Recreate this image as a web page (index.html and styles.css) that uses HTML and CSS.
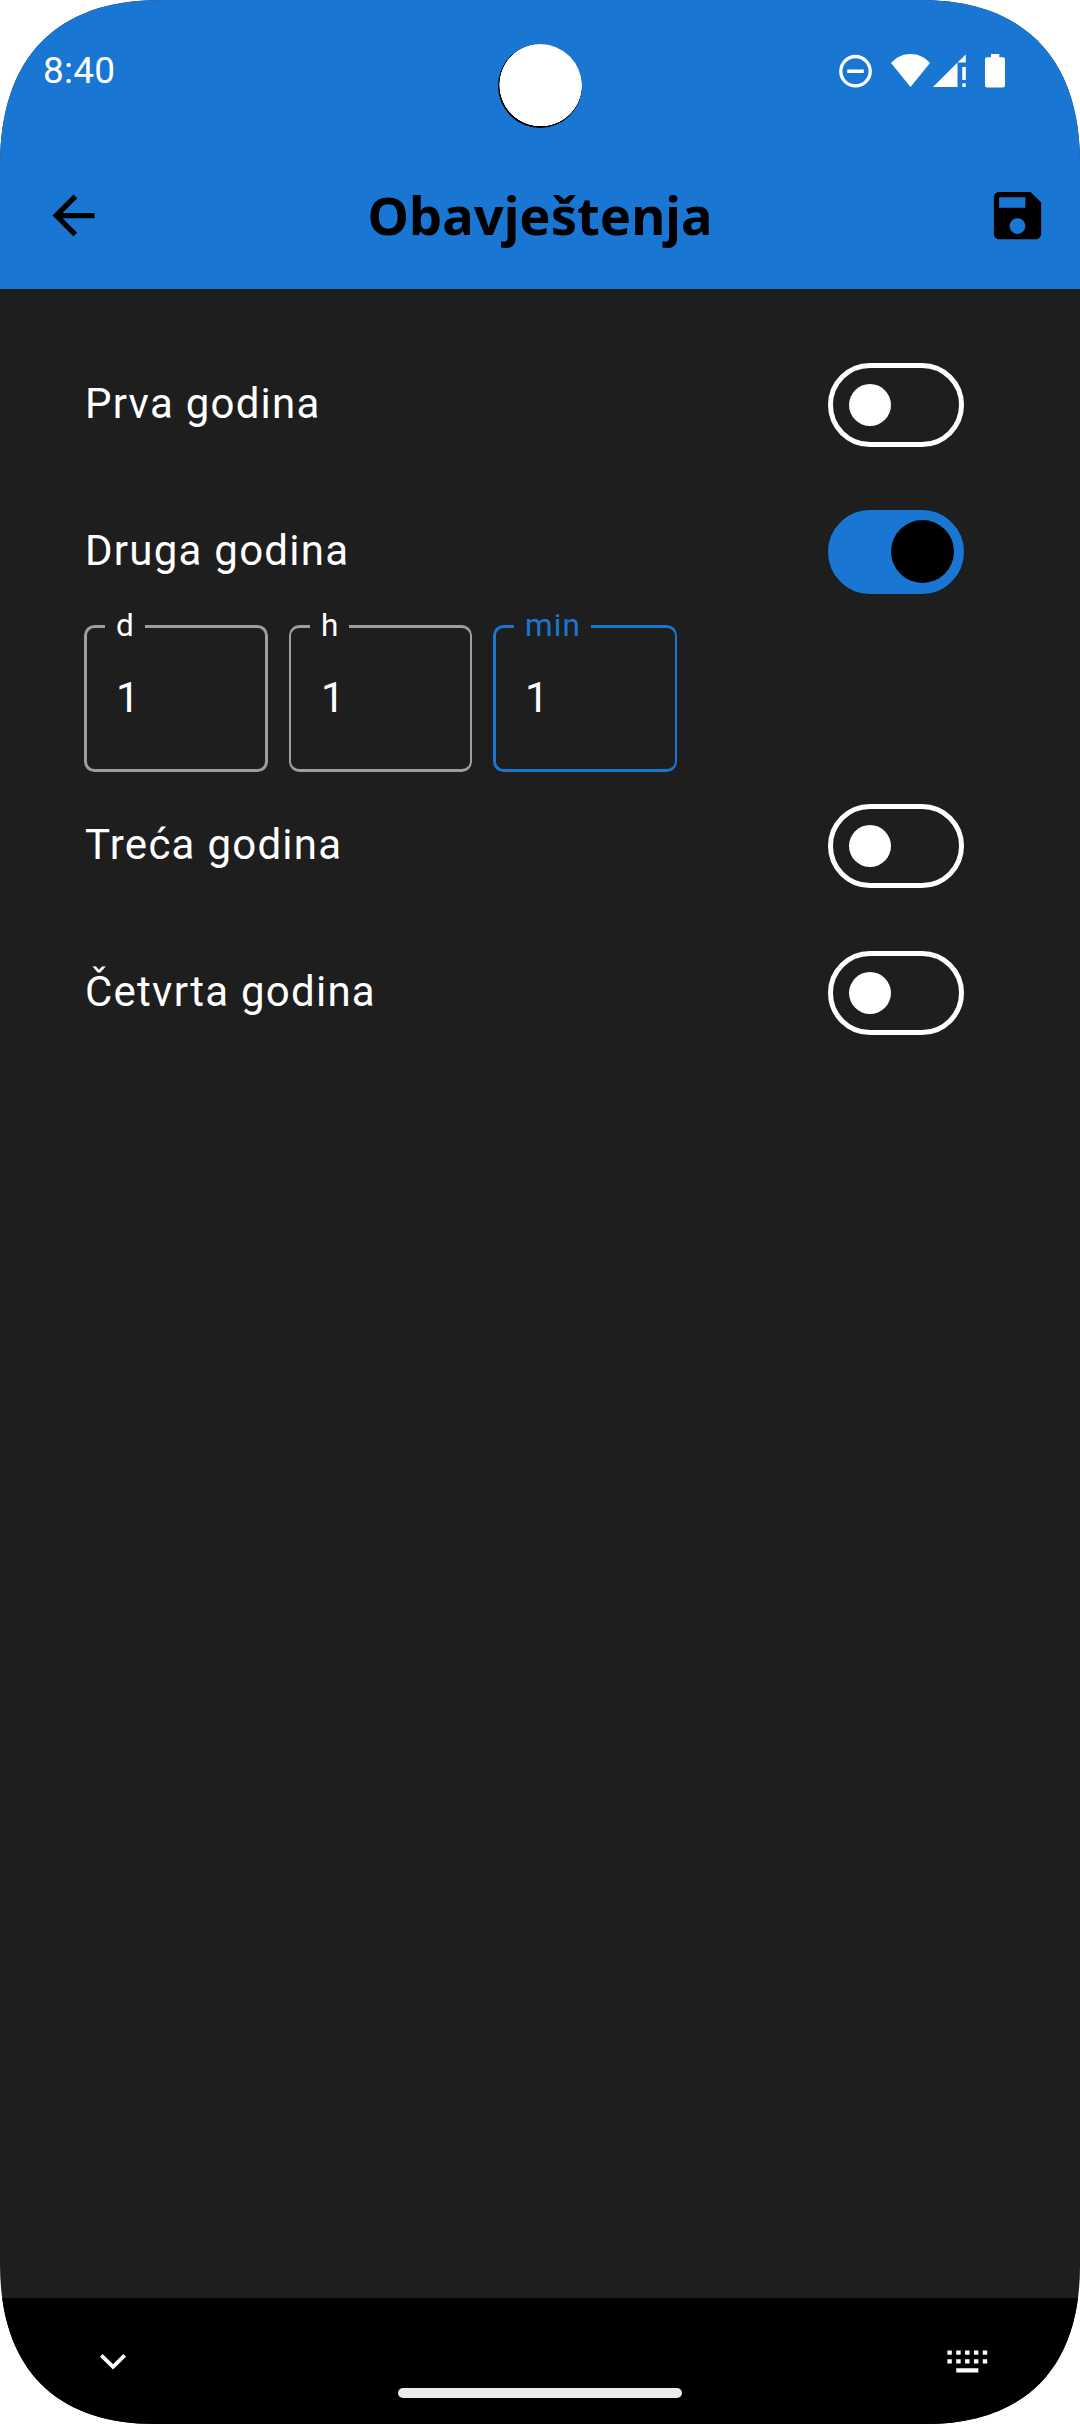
FILE: index.html
```html
<!DOCTYPE html>
<html lang="bs">
<head>
<meta charset="utf-8">
<title>Obavještenja</title>
<link rel="stylesheet" href="styles.css">
</head>
<body>
<div class="screen">
  <div class="camera"></div>
  <header class="top">
    <div class="status">
      <span class="clock">8:40</span>
      <div class="status-icons">
        <svg class="dnd" width="33" height="34" viewBox="0 0 33 34"><circle cx="16.5" cy="17.2" r="14.7" fill="none" stroke="#fff" stroke-width="3.3"/><path d="M8.2 15.500h16.600v3.400H8.200z" fill="#fff"/></svg>
        <svg class="wifi" width="39" height="34" viewBox="0 0 39 34"><path d="M0 9C5.500 3 12 0 19.500 0S33.500 3 39 9L19.500 33z" fill="#fff"/></svg>
        <svg class="signal" width="33" height="34" viewBox="0 0 33 34"><path d="M0 33L24.500 8.500V33zM25 8L32.800 .4V8.600H25zM29.300 13H32.800V26H29.300zM29.300 29.200H32.800V33H29.300z" fill="#fff"/></svg>
        <svg class="battery" width="20" height="34" viewBox="0 0 20 34"><path d="M6 0h8.300v3.300H18a2 2 0 0 1 2 2V31.600a2 2 0 0 1-2 2H2a2 2 0 0 1-2-2V5.300a2 2 0 0 1 2-2H6z" fill="#fff"/></svg>
      </div>
    </div>
    <div class="appbar">
      <svg class="icon" viewBox="0 0 24 24"><path d="M20 11H7.830l5.590-5.590L12 4l-8 8 8 8 1.410-1.410L7.830 13H20v-2z"/></svg>
      <h1 class="title">Obavještenja</h1>
      <svg class="icon icon-save" viewBox="0 0 24 24"><path d="M17 3H5c-1.110 0-2 .9-2 2v14c0 1.100.89 2 2 2h14c1.100 0 2-.9 2-2V7l-4-4zm-5 16c-1.660 0-3-1.340-3-3s1.340-3 3-3 3 1.340 3 3-1.340 3-3 3zm3-10H5V5h10v4z"/></svg>
    </div>
  </header>
  <main class="content">
    <div class="row"><span class="label">Prva godina</span><span class="switch"><span class="thumb"></span></span></div>
    <div class="row"><span class="label">Druga godina</span><span class="switch switch-on"><span class="thumb"></span></span></div>
    <div class="fields">
      <div class="field"><span class="field-label">d</span><span class="value">1</span></div>
      <div class="field field-middle"><span class="field-label">h</span><span class="value">1</span></div>
      <div class="field field-focused"><span class="field-label">min</span><span class="value">1</span></div>
    </div>
    <div class="row"><span class="label">Treća godina</span><span class="switch"><span class="thumb"></span></span></div>
    <div class="row"><span class="label">Četvrta godina</span><span class="switch"><span class="thumb"></span></span></div>
  </main>
  <footer class="nav">
    <svg class="chevron" width="28" height="18" viewBox="0 0 28 18"><path d="M2.300 2.300L14 13.800 25.700 2.300" fill="none" stroke="#fff" stroke-width="3.800"/></svg>
    <span class="pill"></span>
    <svg class="keyboard" width="42" height="24" viewBox="0 0 42 24"><path d="M1.400 1.400h4.400v4.400H1.400zm8.850 0h4.400v4.400h-4.400zm8.850 0h4.400v4.400h-4.400zm8.850 0h4.400v4.400h-4.400zm8.850 0h4.400v4.400h-4.400zM1.400 10.200h4.400v4.400H1.400zm8.850 0h4.400v4.400h-4.400zm8.850 0h4.400v4.400h-4.400zm8.850 0h4.400v4.400h-4.400zm8.850 0h4.400v4.400h-4.400zM10.250 19.200h22.100v4.200h-22.100z" fill="#fff"/></svg>
  </footer>
</div>
</body>
</html>
```
FILE: styles.css
```css
* {
  box-sizing: border-box;
}

body {
  margin: 0;
  background: #fff;
  font-family: Roboto, sans-serif;
  color: #fff;
}

svg {
  display: block;
  flex: none;
}

.screen {
  position: relative;
  display: flex;
  flex-direction: column;
  width: 1080px;
  height: 2424px;
  overflow: hidden;
  background: #1e1e1e;
  clip-path: path("M0 165C0 57 57 0 160 0H920C1023 0 1080 57 1080 163V2266C1080 2368 1025 2424 925 2424H155C55 2424 0 2368 0 2264Z");
}

.top {
  height: 289px;
  background: #1976d2;
}

/* Camera cut-out, with the dark bezel showing along its lower left */
.camera {
  position: absolute;
  left: 497.5px;
  top: 44px;
  width: 84px;
  height: 84px;
  border-radius: 50%;
  background: radial-gradient(circle at 42.7px 41px, #fff 41px, #000 41.5px);
}

.status {
  display: flex;
  justify-content: space-between;
  align-items: center;
  height: 142px;
  padding: 0 75px 0 43px;
}

.clock {
  font-size: 37px;
  line-height: 44px;
  letter-spacing: 0.2px;
}

.status-icons {
  display: flex;
}

.wifi {
  margin-left: 19px;
}

.signal {
  margin-left: 3px;
}

.battery {
  margin-left: 19px;
}

.appbar {
  display: grid;
  grid-template-columns: 1fr auto 1fr;
  align-items: center;
  height: 147px;
  padding: 0 31px 0 42px;
}

.icon {
  width: 63px;
  height: 63px;
  fill: #000;
}

.icon-save {
  justify-self: end;
}

.title {
  margin: 0 11px 1px 0;
  font: bold 52.5px/72px "Noto Sans", "Open Sans", sans-serif;
  color: #000;
}

.content {
  flex: 1;
  padding: 42px 84px 0;
}

.row {
  display: flex;
  justify-content: space-between;
  align-items: center;
  height: 147px;
  padding-right: 32px;
}

.label {
  padding: 0 0 2px 1px;
  font-size: 42px;
  line-height: 63px;
  letter-spacing: 1.25px;
}

.switch {
  display: flex;
  align-items: center;
  width: 136px;
  height: 84px;
  padding: 0 16px;
  border: 5px solid #fff;
  border-radius: 42px;
}

.thumb {
  width: 42px;
  height: 42px;
  border-radius: 50%;
  background: #fff;
}

.switch-on {
  justify-content: flex-end;
  padding: 0 5px;
  border-color: #1976d2;
  background: #1976d2;
}

.switch-on .thumb {
  width: 63px;
  height: 63px;
  background: #000;
}

.fields {
  display: flex;
  gap: 21px;
}

.field {
  position: relative;
  display: flex;
  align-items: center;
  width: 184px;
  height: 147px;
  padding: 0 0 2px 29px;
  border: 3px solid #9e9e9e;
  border-radius: 10.5px;
}

.field-middle {
  width: 183px;
  padding-left: 30px;
  border-right-width: 2px;
  border-left-width: 2px;
}

.field-focused {
  border-color: #1976d2;
  border-right-width: 2px;
}

/* Floating label that breaks the top border */
.field-label {
  position: absolute;
  left: 18px;
  top: -23px;
  padding: 0 10px 0 11px;
  font-size: 31.5px;
  line-height: 42px;
  letter-spacing: 1.05px;
  background: #1e1e1e;
}

.field-middle .field-label {
  left: 19px;
}

.field-focused .field-label {
  color: #1976d2;
}

.value {
  font-size: 42px;
  line-height: 63px;
}

.nav {
  display: grid;
  grid-template-columns: 1fr 284px 1fr;
  height: 126px;
  background: #000;
}

.chevron {
  margin: 55px 0 0 99px;
}

.pill {
  height: 10px;
  margin-top: 90px;
  border-radius: 5px;
  background: #ececec;
}

.keyboard {
  justify-self: end;
  margin: 51px 92px 0 0;
}
```
